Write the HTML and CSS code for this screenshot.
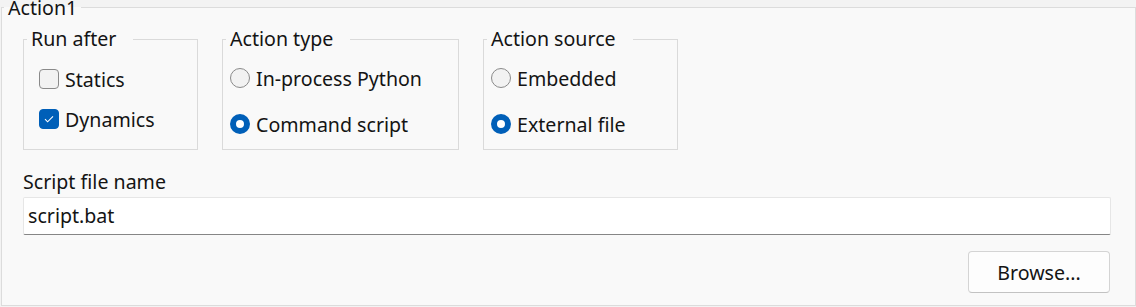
FILE: index.html
```html
<!DOCTYPE html>
<html lang="en">
<head>
    <meta charset="UTF-8">
    <meta name="viewport" content="width=device-width, initial-scale=1.0">
    <title>Action1</title>
    <link rel="stylesheet" href="styles.css">
</head>
<body>
    <fieldset class="action">
        <legend>Action1</legend>

        <div class="groups">
            <fieldset class="group run-after">
                <legend>Run after</legend>
                <div class="opts">
                    <div class="opt"><span class="check"></span>Statics</div>
                    <div class="opt"><span class="check on"><svg viewBox="0 0 20 20" width="20" height="20"><path d="M6 10.2 L8.6 12.8 L14 7.4" fill="none" stroke="#fff" stroke-width="1.1"/></svg></span>Dynamics</div>
                </div>
            </fieldset>

            <fieldset class="group action-type">
                <legend>Action type</legend>
                <div class="opts">
                    <div class="opt"><span class="radio"></span>In-process Python</div>
                    <div class="opt"><span class="radio on"></span>Command script</div>
                </div>
            </fieldset>

            <fieldset class="group action-source">
                <legend>Action source</legend>
                <div class="opts">
                    <div class="opt"><span class="radio"></span>Embedded</div>
                    <div class="opt"><span class="radio on"></span>External file</div>
                </div>
            </fieldset>
        </div>

        <div class="field">
            <div class="field-label">Script file name</div>
            <div class="text-input">script.bat</div>
        </div>

        <div class="buttons">
            <button class="btn">Browse...</button>
        </div>
    </fieldset>
</body>
</html>
```

FILE: styles.css
```css
body {
    margin: 0 0 0 1px;
    background: #f3f3f3;
    font-family: "Noto Sans", "Open Sans", sans-serif;
    font-size: 19.6px;
    color: #141414;
}
fieldset {
    margin: 0;
    min-width: 0;
}
.action {
    height: 306px;
    box-sizing: border-box;
    padding: 0 24px 0 21px;
    border: 1px solid #dcdcdc;
    background: #f9f9f9;
}
.action > legend {
    margin-left: -19px;
    padding: 1px 4px 0 4px;
    line-height: 14px;
}
.groups {
    display: flex;
    gap: 24px;
    margin-top: 16px;
}
.group {
    height: 119px;
    box-sizing: border-box;
    padding: 0;
    border: 1px solid #dadada;
}
.group > legend {
    margin-left: 3px;
    padding: 0 17px 0 4px;
    line-height: 16px;
}
.run-after { width: 175px; }
.action-type { width: 237px; }
.action-source { width: 195px; }

.opts {
    padding: 8px 0 0 7px;
}
.run-after .opts {
    padding: 12px 0 0 15px;
}
.opt {
    display: flex;
    align-items: center;
    height: 46px;
    white-space: nowrap;
}
.run-after .opt {
    height: 40px;
}
.check,
.radio {
    width: 20px;
    height: 20px;
    box-sizing: border-box;
    margin-right: 6px;
    border: 1px solid #8a8a8a;
    background: #f2f2f2;
    flex: none;
}
.check {
    border-radius: 4px;
}
.check svg {
    display: block;
    margin: -1px;
}
.check.on {
    background: #005fb8;
    border-color: #005fb8;
}
.radio {
    border-radius: 50%;
}
.radio.on {
    border: 6px solid #005fb8;
    background: #fff;
}

.field {
    margin-top: 20px;
}
.field-label {
    line-height: 24px;
}
.text-input {
    margin-top: 3px;
    height: 38px;
    box-sizing: border-box;
    padding: 0 4px;
    line-height: 36px;
    background: #fff;
    border: 1px solid #e6e6e6;
    border-bottom-color: #868686;
    border-radius: 2px;
}
.buttons {
    display: flex;
    justify-content: flex-end;
    margin-top: 16px;
}
.btn {
    width: 142px;
    height: 42px;
    margin-right: 1px;
    font: inherit;
    color: inherit;
    background: #fdfdfd;
    border: 1px solid #d4d4d4;
    border-bottom-color: #c2c2c2;
    border-radius: 4px;
}
```
